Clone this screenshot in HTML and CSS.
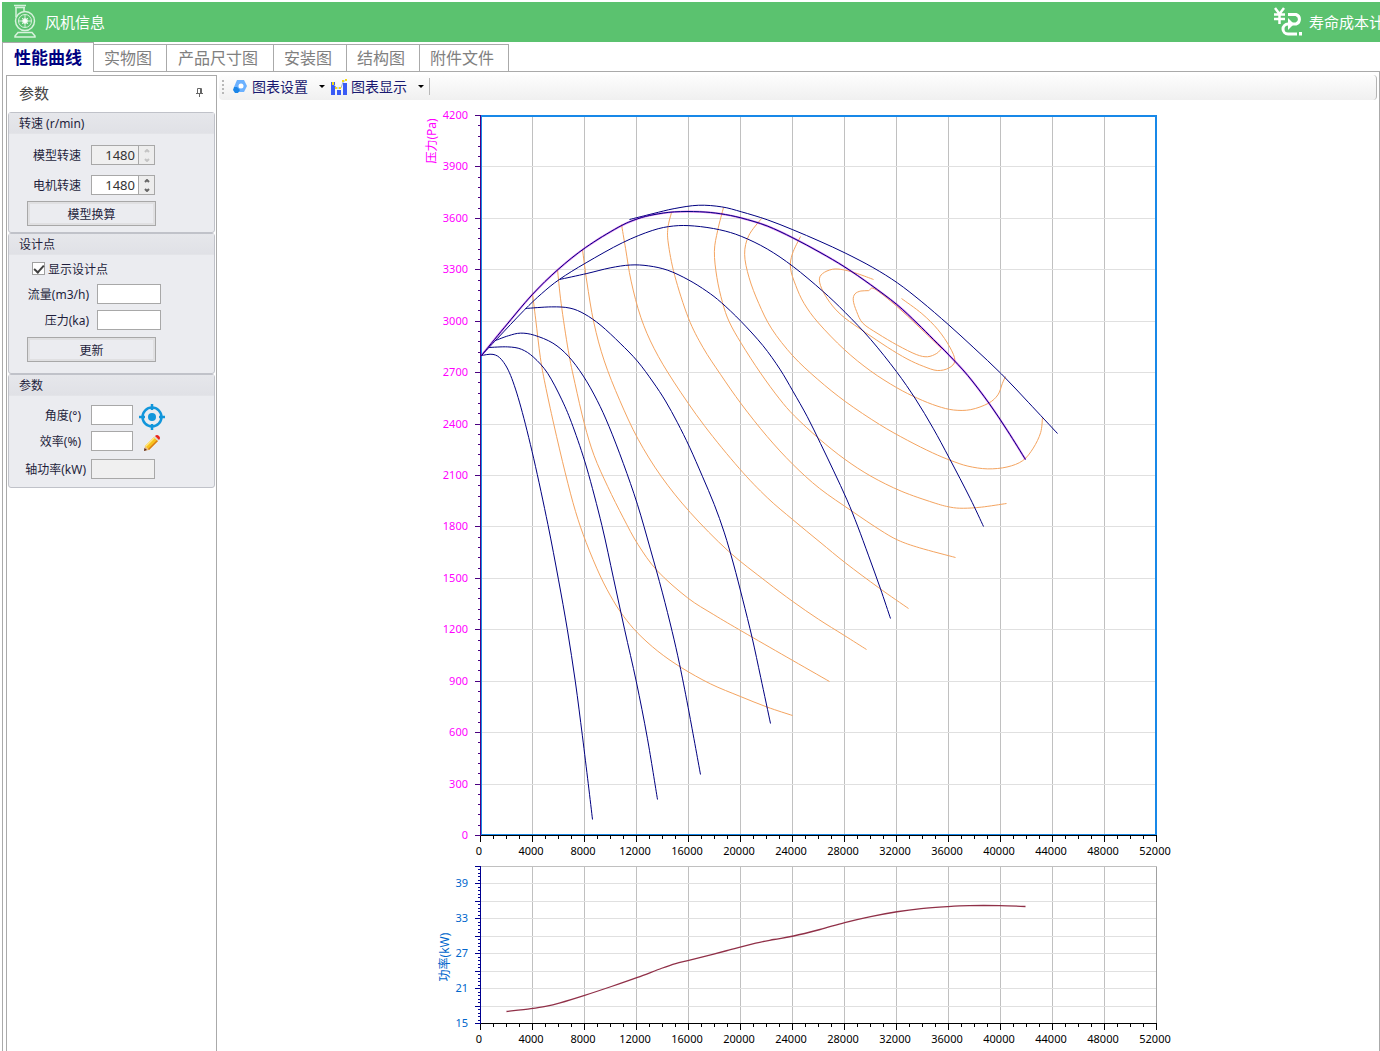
FILE: index.html
```html
<!DOCTYPE html>
<html lang="zh-CN">

<head>
    <meta charset="UTF-8">
    <meta name="viewport" content="width=device-width, initial-scale=1.0">
    <title>风机信息</title>
    <link rel="stylesheet" href="styles.css">
</head>

<body>
    <header class="titlebar">
        <svg class="fan-icon" width="24" height="34" viewBox="0 0 24 34" fill="none" stroke="#d8f2dd">
            <path d="M1 1.500h12M2 3.500h10" stroke-width="1.500" />
            <path d="M3 4v9M11 4v3" stroke-width="1.500" />
            <circle cx="12" cy="17" r="9.500" stroke-width="1.500" />
            <circle cx="12" cy="17" r="6.500" />
            <path d="M12 11v12M6 17h12M9 14l6 6M15 14l-6 6" stroke-width="1" />
            <circle cx="12" cy="17" r="2.500" fill="#fff" />
            <path d="M5 28.500h14l3 3.500v1H2v-1z" stroke-width="1.500" />
        </svg>
        <h1>风机信息</h1>
        <a class="cost-link" href="#">
            <svg width="29" height="29" viewBox="0 0 29 29" fill="none" stroke="#fff">
                <path d="M2 1l4.500 6L11 1M1 7.500h11M1 12h11M6.500 7v10" stroke-width="2.500" />
                <path d="M15 7.500h8a5 5 0 0 1 0 9.500H15a5 5 0 0 0 0 10h9" stroke-width="3" />
                <path d="M15 11v12l6-6z" fill="#fff" stroke="none" />
                <path d="M26 25h3v3.500h-3z" fill="#fff" stroke="none" />
            </svg>
            <span>寿命成本计</span>
        </a>
    </header>

    <nav class="tabs">
        <button type="button" class="tab active">性能曲线</button>
        <button type="button" class="tab">实物图</button>
        <button type="button" class="tab tab-wide">产品尺寸图</button>
        <button type="button" class="tab">安装图</button>
        <button type="button" class="tab">结构图</button>
        <button type="button" class="tab">附件文件</button>
    </nav>

    <main class="workspace">
        <aside class="sidebar">
            <div class="sidebar-title">
                <h2>参数</h2>
                <svg width="7" height="9" viewBox="0 0 7 9" fill="none" stroke="#666">
                    <path d="M1.500 5.500v-5h4v5M0 5.500h7M3.500 6v3" />
                    <path d="M4 1h2v5H4z" fill="#666" stroke="none" />
                </svg>
            </div>

            <form class="group">
                <h3>转速 (r/min)</h3>
                <div class="group-body">
                    <div class="row">
                        <label for="modelSpeed">模型转速</label>
                        <span class="spinner disabled">
                            <input type="text" id="modelSpeed" value="1480" disabled>
                            <span class="arrows">
                                <button type="button" aria-label="+" disabled><svg width="6" height="4" viewBox="0 0 6 4"><path d="M1 3l2-2 2 2" /></svg></button>
                                <button type="button" aria-label="-" disabled><svg width="6" height="4" viewBox="0 0 6 4"><path d="M1 1l2 2 2-2" /></svg></button>
                            </span>
                        </span>
                    </div>
                    <div class="row">
                        <label for="motorSpeed">电机转速</label>
                        <span class="spinner">
                            <input type="text" id="motorSpeed" value="1480">
                            <span class="arrows">
                                <button type="button" aria-label="+"><svg width="6" height="4" viewBox="0 0 6 4"><path d="M1 3l2-2 2 2" /></svg></button>
                                <button type="button" aria-label="-"><svg width="6" height="4" viewBox="0 0 6 4"><path d="M1 1l2 2 2-2" /></svg></button>
                            </span>
                        </span>
                    </div>
                    <button type="button" class="btn">模型换算</button>
                </div>
            </form>

            <form class="group">
                <h3>设计点</h3>
                <div class="group-body design">
                    <div class="check">
                        <input type="checkbox" id="showPoint" checked>
                        <label for="showPoint">显示设计点</label>
                    </div>
                    <div class="row">
                        <label for="flow">流量(m3/h)</label>
                        <input type="text" class="field" id="flow">
                    </div>
                    <div class="row">
                        <label for="pressure">压力(ka)</label>
                        <input type="text" class="field" id="pressure">
                    </div>
                    <button type="button" class="btn">更新</button>
                </div>
            </form>

            <form class="group">
                <h3>参数</h3>
                <div class="group-body params">
                    <div class="row">
                        <label for="angle">角度(°)</label>
                        <input type="text" class="field short" id="angle">
                        <button type="button" class="icon-btn" aria-label="定位">
                            <svg width="26" height="26" viewBox="0 0 26 26" fill="none" stroke="#1296db">
                                <circle cx="13" cy="13" r="9.500" stroke-width="2.500" />
                                <path d="M13 0v6M13 20v6M0 13h6M20 13h6" stroke-width="2.500" />
                                <circle cx="13" cy="13" r="4" fill="#1296db" stroke="none" />
                            </svg>
                        </button>
                    </div>
                    <div class="row">
                        <label for="efficiency">效率(%)</label>
                        <input type="text" class="field short" id="efficiency">
                        <button type="button" class="icon-btn" aria-label="编辑">
                            <svg width="16" height="16" viewBox="0 0 16 16">
                                <path d="M0 16l1-5 4 4z" fill="#e8b98a" />
                                <path d="M0 16l.5-3L3 15z" fill="#5a2b1a" />
                                <path d="M1 11l9-9 4 4-9 9z" fill="#f8c21c" />
                                <path d="M4 14l9-9 1 1-9 9z" fill="#d87a18" />
                                <path d="M1 11l9-9 1 1-9 9z" fill="#ffe680" />
                                <path d="M10 2l1-1 4 4-1 1z" fill="#d8d8d8" />
                                <path d="M11 1q2-2 4 0t0 4z" fill="#e8261c" />
                            </svg>
                        </button>
                    </div>
                    <div class="row">
                        <label for="shaftPower">轴功率(kW)</label>
                        <input type="text" class="field" id="shaftPower" readonly>
                    </div>
                </div>
            </form>
        </aside>

        <section class="content">
            <div class="toolbar">
                <span class="grip"></span>
                <button type="button" class="tool">
                    <svg width="16" height="16" viewBox="0 0 16 16">
                        <path d="M5 1h7l3 6-3 6H6L2 8z" fill="#6bb1ff" />
                        <path d="M2 8h3l3 3-2 3H3l-2-3z" fill="#1b86e8" />
                        <circle cx="9" cy="7" r="2.500" fill="#fff" />
                    </svg>
                    图表设置<i class="caret"></i>
                </button>
                <button type="button" class="tool">
                    <svg width="16" height="16" viewBox="0 0 16 16">
                        <path d="M0 3h4v13H0zM6 11h4v5H6zM12 4h4v12h-4z" fill="#3a5cf5" />
                        <path d="M2 5l4 4h4l2-6 3-2" fill="none" stroke="#9ab0d8" />
                        <path d="M1 3h2v3H1zM8 8h2v2H8zM11 1h2v2h-2zM14 0h2v2h-2zM4 8h2v2H4z" fill="#f5dc10" />
                    </svg>
                    图表显示<i class="caret"></i>
                </button>
                <span class="divider"></span>
            </div>
            <div class="charts">
                <svg id="pressureChart" class="chart" viewBox="420 100 756 760"></svg>
                <svg id="powerChart" class="chart" viewBox="420 860 756 190"></svg>
            </div>
        </section>
    </main>

    <script>
        const NS = 'http://www.w3.org/2000/svg';
        const LEFT = 480, RIGHT = 1156;

        // constant angle curves, [x, y, x, y, ...]
        const angleCurves = [
            [481,355, 493,353, 501,358, 510,373, 520,404, 533,456, 548,526, 558,579, 567,629, 575,681, 582,736, 588,785, 592,819],
            [488,347, 508,346, 521,348, 533,356, 547,371, 562,400, 572,424, 586,465, 602,526, 613,578, 624,629, 636,681, 647,737, 657,799],
            [495,340, 508,335, 520,332, 533,334, 553,342, 568,355, 583,375, 597,400, 608,424, 623,463, 637,503, 650,549, 662,592, 672,632, 679,663, 687,703, 700,774],
            [525,308, 552,306, 570,307, 584,313, 600,324, 620,343, 637,360, 653,382, 665,400, 677,422, 689,446, 702,476, 714,504, 724,532, 733,563, 742,598, 752,638, 760,676, 770,723],
            [559,279, 587,273, 610,267, 630,264, 648,265, 667,269, 688,279, 707,291, 720,301, 740,320, 763,345, 780,369, 792,390, 807,416, 820,443, 833,470, 847,500, 857,525, 868,555, 880,588, 890,618],
            [481,355, 495,340, 525,308, 541,293, 558,279, 584,263, 623,241, 653,229, 673,225, 693,225, 720,229, 740,235, 767,248, 792,265, 823,291, 844,311, 870,338, 897,372, 915,398, 933,428, 948,456, 971,500, 983,526],
            [629,219, 653,213, 673,208, 698,204, 722,206, 740,211, 767,219, 792,229, 820,241, 844,252, 873,267, 897,282, 920,300, 948,324, 973,347, 1001,373, 1028,402, 1057,433]
        ];

        const currentCurve = [481,355, 503,328, 532,293, 557,269, 584,247, 620,225, 637,218, 653,214, 673,211, 700,211, 720,213, 740,217, 767,225, 792,237, 820,252, 844,266, 870,284, 897,304, 917,323, 933,339, 948,354, 967,374, 989,403, 1007,430, 1025,459];

        // constant efficiency contours
        const effCurves = [
            [532,293, 535,317, 540,360, 544,381, 553,423, 565,474, 575,512, 585,541, 600,577, 613,601, 623,616, 636,632, 657,651, 680,667, 710,684, 740,696, 767,707, 792,715],
            [557,269, 560,300, 568,353, 574,381, 584,425, 593,455, 607,486, 623,518, 637,544, 655,570, 688,599, 713,614, 740,630, 787,657, 829,681],
            [582,249, 586,280, 593,323, 603,360, 619,400, 637,439, 660,476, 688,511, 728,552, 767,582, 792,601, 818,619, 844,635, 866,649],
            [621,224, 625,247, 630,280, 640,318, 653,348, 672,380, 703,425, 740,470, 767,498, 792,519, 820,542, 844,562, 879,588, 908,608],
            [671,212, 667,227, 667,240, 673,273, 688,320, 702,347, 720,374, 740,403, 767,437, 792,464, 818,488, 852,511, 880,530, 897,540, 917,547, 955,557],
            [723,207, 717,230, 713,250, 716,277, 722,303, 728,321, 740,342, 760,373, 780,400, 792,414, 819,439, 844,459, 870,476, 900,491, 935,503, 950,507, 962,508, 980,507, 1006,503],
            [761,218, 747,235, 743,253, 748,277, 758,303, 770,328, 792,356, 817,379, 844,401, 880,425, 907,440, 933,453, 950,460, 967,466, 987,469, 1007,467, 1023,461, 1033,448, 1041,432, 1042,417],
            [800,236, 791,254, 789,267, 795,285, 803,303, 816,321, 844,350, 870,371, 897,388, 917,398, 937,406, 953,410, 970,410, 989,403, 998,395, 1002,382, 1005,376],
            [873,279, 857,273, 843,269, 832,268, 821,273, 818,279, 822,291, 832,306, 843,317, 865,332, 887,347, 907,359, 923,366, 937,371, 949,368, 956,361, 950,347, 938,329, 922,313, 901,298],
            [941,348, 937,353, 927,357, 917,355, 897,345, 877,333, 861,323, 856,311, 852,299, 854,293, 860,290, 869,291, 871,285, 897,306, 917,325, 941,348]
        ];

        const powerCurve = [506,1011, 532,1008, 545,1006, 558,1003, 584,995, 611,986, 637,977, 663,967, 675,963, 688,960, 727,950, 757,942, 773,939, 792,936, 820,929, 844,922, 870,916, 897,911, 920,908, 948,906, 967,905, 1000,905, 1025,906];

        function add(svg, name, attrs, text) {
            const el = document.createElementNS(NS, name);
            for (const key in attrs) el.setAttribute(key, attrs[key]);
            if (text !== undefined) el.textContent = text;
            svg.appendChild(el);
        }

        function line(svg, x1, y1, x2, y2, cls) {
            add(svg, 'line', { x1: x1 + 0.5, y1: y1 + 0.5, x2: x2 + 0.5, y2: y2 + 0.5, class: cls });
        }

        // smooth line, inner points are slightly averaged with their neighbours
        function curve(svg, flat, cls) {
            const raw = [];
            for (let i = 0; i < flat.length; i += 2) raw.push([flat[i] + 0.5, flat[i + 1] + 0.5]);
            const p = raw.map((q, i) => {
                if (i === 0 || i === raw.length - 1) return q;
                return [0, 1].map(k => (raw[i - 1][k] + 6 * q[k] + raw[i + 1][k]) / 8);
            });
            let d = `M${p[0]}`;
            for (let i = 0; i < p.length - 1; i++) {
                const a = p[i - 1] || p[i], b = p[i], c = p[i + 1], e = p[i + 2] || c;
                const c1 = [b[0] + (c[0] - a[0]) / 6, b[1] + (c[1] - a[1]) / 6];
                const c2 = [c[0] - (e[0] - b[0]) / 6, c[1] - (e[1] - b[1]) / 6];
                d += `C${c1} ${c2} ${c}`;
            }
            add(svg, 'path', { d, class: cls });
        }

        function flowAxis(svg, bottom) {
            line(svg, LEFT, bottom, RIGHT, bottom, 'axis-x');
            for (let i = 0; i <= 52; i++) {
                const x = LEFT + i * 13;
                line(svg, x, bottom, x, bottom + (i % 4 ? 3 : 6), 'axis-x');
                if (i % 4 === 0) add(svg, 'text', { x: x - 1, y: bottom + 20, class: 'label-x' }, i * 1000);
            }
        }

        function verticalGrid(svg, top, bottom) {
            for (let x = LEFT + 52; x < RIGHT; x += 52) line(svg, x, top, x, bottom, 'grid-v');
        }

        const pressure = document.getElementById('pressureChart');
        verticalGrid(pressure, 115, 835);
        for (let v = 300; v < 4200; v += 300) {
            const y = Math.round(835 - v * 720 / 4200);
            line(pressure, LEFT, y, RIGHT, y, 'grid-h');
        }
        add(pressure, 'rect', { x: 481, y: 116, width: 675, height: 719, class: 'frame' });
        effCurves.forEach(c => curve(pressure, c, 'eff'));
        angleCurves.forEach(c => curve(pressure, c, 'angle'));
        curve(pressure, currentCurve, 'current');
        curve(pressure, currentCurve, 'angle');
        line(pressure, LEFT, 115, LEFT, 835, 'axis-p');
        for (let i = 0; i <= 70; i++) {
            const y = Math.round(835 - i * 720 / 70);
            line(pressure, LEFT - (i % 5 ? 3 : 6), y, LEFT, y, 'axis-p');
            if (i % 5 === 0) add(pressure, 'text', { x: 468, y: y + 4, class: 'label-p' }, i * 60);
        }
        flowAxis(pressure, 835);
        add(pressure, 'text', { transform: 'translate(436 141) rotate(-90)', class: 'title-p' }, '压力(Pa)');

        const power = document.getElementById('powerChart');
        verticalGrid(power, 866, 1023);
        for (let v = 18; v <= 39; v += 3) {
            const y = Math.round(1023 - (v - 15) * 35 / 6);
            line(power, LEFT, y, RIGHT, y, 'grid-h');
        }
        line(power, LEFT, 866, RIGHT, 866, 'grid-v');
        line(power, RIGHT, 866, RIGHT, 1023, 'edge');
        curve(power, powerCurve, 'power');
        line(power, LEFT, 866, LEFT, 1023, 'axis-w');
        for (let i = 0; i <= 45; i++) {
            const y = Math.round(1023 - i * 35 / 10);
            line(power, LEFT - (i % 5 ? 3 : 6), y, LEFT, y, 'axis-w');
            if (i % 10 === 0) add(power, 'text', { x: 468, y: y + 4, class: 'label-w' }, 15 + i * 6 / 10);
        }
        flowAxis(power, 1023);
        add(power, 'text', { transform: 'translate(449 957) rotate(-90)', class: 'title-w' }, '功率(kW)');
    </script>
</body>

</html>
```
FILE: styles.css
```css
* {
    box-sizing: border-box;
}

body {
    display: flex;
    flex-direction: column;
    min-height: 100vh;
    margin: 0;
    padding: 2px 0 0 2px;
    overflow: hidden;
    background: #fff;
    font-family: "Noto Sans", "Noto Sans CJK SC", sans-serif;
    font-size: 12px;
    color: #1e1e3c;
}

h1,
h2,
h3 {
    margin: 0;
    font-weight: normal;
}

button,
input {
    font-family: inherit;
    font-size: inherit;
    color: inherit;
}

/* header */
.titlebar {
    display: flex;
    align-items: center;
    height: 40px;
    padding: 0 0 2px 11px;
    overflow: hidden;
    background: #5bc26f;
    color: #fff;
    font-size: 15px;
}

.titlebar svg {
    flex: none;
}

.titlebar h1 {
    margin-left: 8px;
    font-size: 15px;
}

.cost-link {
    display: flex;
    align-items: center;
    gap: 7px;
    width: 107px;
    margin-left: auto;
    overflow: hidden;
    color: #fff;
    text-decoration: none;
    white-space: nowrap;
}

/* tabs */
.tabs {
    display: flex;
    align-items: flex-end;
    height: 30px;
    border-bottom: 1px solid #aaa;
}

.tab {
    height: 28px;
    margin-bottom: -1px;
    padding: 0 14px 0 10px;
    border: 1px solid #aaa;
    border-left: 0;
    background: #fff;
    color: #808080;
    font-size: 16px;
    line-height: 26px;
}

.tab-wide {
    padding: 0 15px 0 11px;
}

.tab.active {
    height: 30px;
    padding: 0 11px;
    border-left: 1px solid #aaa;
    border-bottom: 0;
    color: #000080;
    font-size: 17px;
    font-weight: bold;
}

.workspace {
    display: flex;
    flex: 1;
    border-left: 1px solid #aaa;
    border-right: 1px solid #aaa;
}

/* left panel */
.sidebar {
    flex: none;
    width: 211px;
    margin: 3px 0 0 3px;
    padding: 0 1px;
    border: 1px solid #aaa;
    border-bottom: 0;
}

.sidebar-title {
    display: flex;
    align-items: center;
    justify-content: space-between;
    height: 36px;
    padding: 0 12px 3px 11px;
    color: #444;
}

.sidebar-title h2 {
    font-size: 15px;
}

.group {
    border: 1px solid #c0c2c9;
    border-radius: 3px;
    background: #ebecf0;
}

.group h3 {
    height: 21px;
    padding-left: 10px;
    border-bottom: 1px solid #e3e4e8;
    background: linear-gradient(#e6e7eb, #e0e1e6);
    font-size: 12px;
    line-height: 22px;
}

.group-body {
    display: grid;
    gap: 10px;
    padding: 11px 0 6px;
}

.group-body.design {
    gap: 6px;
    padding: 6px 0 11px;
}

.group-body.params {
    gap: 6px;
    padding: 9px 0 8px;
}

.row {
    display: grid;
    grid-template-columns: 72px auto 1fr;
    column-gap: 10px;
    align-items: center;
    height: 20px;
}

.row label {
    text-align: right;
    white-space: nowrap;
}

.design .row {
    grid-template-columns: 80px auto 1fr;
    column-gap: 8px;
}

.params .row {
    grid-template-columns: 72px auto 1fr;
}

.params .row:last-child {
    grid-template-columns: 77px auto 1fr;
    column-gap: 5px;
    margin-top: 2px;
}

.field {
    width: 64px;
    height: 20px;
    padding: 0 3px;
    border: 1px solid #a8a8a8;
    background: #fff;
}

.field.short {
    width: 42px;
}

.field:read-only {
    background: #f0f0f0;
}

.spinner {
    display: flex;
    width: 64px;
    height: 20px;
    border: 1px solid #a8a8a8;
    background: #fff;
    font-size: 13px;
}

.spinner input {
    flex: 1;
    min-width: 0;
    padding: 0 3px;
    border: 0;
    background: none;
    color: #333;
    text-align: right;
}

.arrows {
    display: flex;
    flex-direction: column;
    width: 16px;
    border-left: 1px solid #a8a8a8;
}

.arrows button {
    display: flex;
    flex: 1;
    align-items: center;
    justify-content: center;
    padding: 0;
    border: 0;
    background: #ededed;
}

.arrows path {
    fill: none;
    stroke: #666;
    stroke-width: 2;
}

.spinner.disabled {
    background: #f0f0f0;
}

.spinner.disabled path {
    stroke: #c4c4c4;
}

.btn {
    width: 129px;
    height: 25px;
    margin-left: 18px;
    padding: 0;
    border: 1px solid #a8a8a8;
    background: #ebecf0;
    box-shadow: inset 0 0 0 2px #e0e0e2;
}

.group-body .btn {
    margin-top: -4px;
}

.group-body.design .btn {
    margin-top: 1px;
}

.check {
    display: flex;
    align-items: center;
    gap: 3px;
    height: 17px;
    padding: 0 0 2px 23px;
}

.check input {
    appearance: none;
    width: 13px;
    height: 13px;
    margin: 0;
    border: 1px solid #a0a0a0;
    background: #fff;
}

.check input:checked::before {
    content: "";
    display: block;
    width: 8px;
    height: 4px;
    margin: 2px 1px;
    border-left: 2px solid #404040;
    border-bottom: 2px solid #404040;
    transform: rotate(-48deg);
}

.icon-btn {
    display: flex;
    align-items: center;
    justify-content: center;
    width: 26px;
    height: 20px;
    margin-left: -4px;
    padding: 3px 0 0;
    border: 0;
    background: none;
}

.icon-btn svg {
    flex: none;
}

/* toolbar */
.content {
    flex: 1;
    min-width: 0;
    padding: 3px 2px 0 2px;
}

.toolbar {
    display: flex;
    align-items: center;
    gap: 8px;
    height: 25px;
    padding: 0 0 2px 3px;
    border-right: 1px solid #b4b4b4;
    border-radius: 4px;
    background: linear-gradient(#fdfdfd, #f0f0f0);
}

.grip {
    width: 2px;
    height: 14px;
    background: repeating-linear-gradient(#b8b8b8 0 2px, transparent 2px 4px);
}

.tool {
    display: flex;
    align-items: center;
    gap: 4px;
    padding: 0;
    border: 0;
    background: none;
    color: #191970;
    font-size: 14px;
    line-height: 20px;
}

.tool + .tool {
    margin-left: -2px;
}

.caret {
    margin-left: 7px;
    border: 3px solid transparent;
    border-top-color: #000;
    border-bottom: 0;
}

.divider {
    width: 1px;
    height: 17px;
    margin-left: -3px;
    background: #b8b8b8;
}

/* charts */
.charts {
    display: flex;
    flex-direction: column;
    align-items: center;
}

.chart {
    width: 756px;
    max-width: 100%;
}

.chart line,
.frame {
    fill: none;
    shape-rendering: crispEdges;
}

.chart path {
    fill: none;
}

.grid-v {
    stroke: #c0c0c0;
}

.grid-h {
    stroke: #e0e0e0;
}

.edge {
    stroke: #a0a0a0;
}

.frame {
    stroke: #1888e8;
    stroke-width: 2;
}

.eff {
    stroke: #f4a460;
}

.current {
    stroke: #c000e0;
    stroke-width: 2;
    stroke-opacity: 0.5;
}

.angle {
    stroke: #000080;
}

.power {
    stroke: #903048;
    stroke-width: 1.3;
}

.axis-x {
    stroke: #000;
}

.axis-p {
    stroke: #4b0082;
}

.axis-w {
    stroke: #000090;
}

.chart text {
    font-size: 11px;
}

.label-x {
    fill: #000;
    text-anchor: middle;
}

.label-p {
    fill: #f0f;
    text-anchor: end;
}

.label-w {
    fill: #0066cc;
    text-anchor: end;
}

.chart .title-p,
.chart .title-w {
    font-size: 12px;
    text-anchor: middle;
}

.title-p {
    fill: #f0f;
}

.title-w {
    fill: #0066cc;
}
```
